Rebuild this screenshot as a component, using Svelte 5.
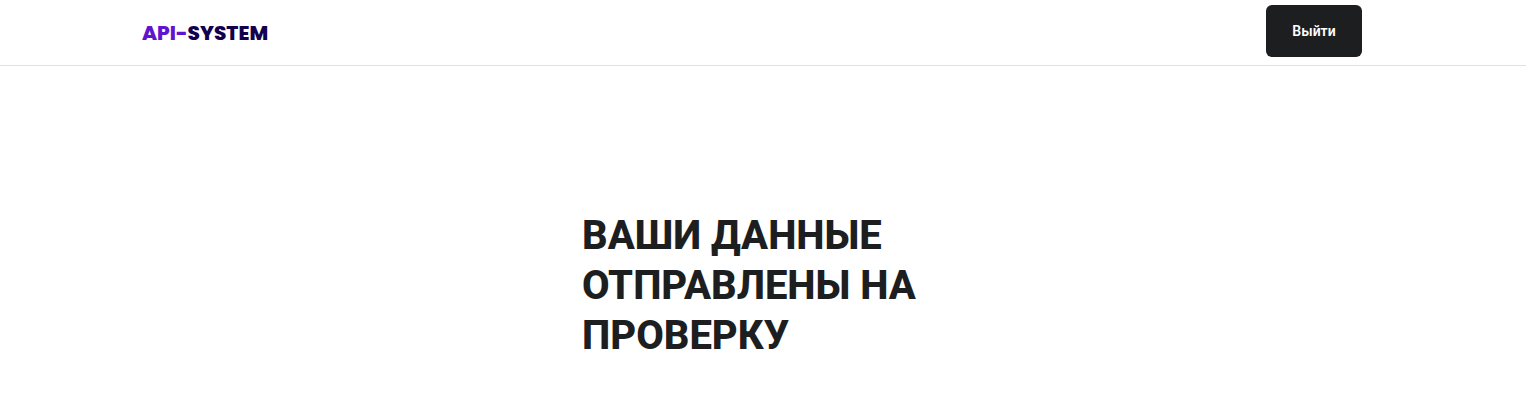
<script>
  let title = 'ВАШИ ДАННЫЕ ОТПРАВЛЕНЫ НА ПРОВЕРКУ';
</script>

<header class="header">
  <div class="logo"><span class="accent">API-</span>SYSTEM</div>
  <button class="logout">Выйти</button>
</header>

<main class="content">
  <h1>{title}</h1>
</main>

<style>
  :global(body) {
    margin: 0;
    background: #fff;
    font-family: Roboto, sans-serif;
  }

  .header {
    display: flex;
    justify-content: space-between;
    align-items: center;
    height: 65px;
    padding: 0 164px 0 142px;
    border-bottom: 1px solid #e2e2e2;
  }

  .logo {
    font-family: Poppins, "Open Sans", sans-serif;
    font-weight: 800;
    font-size: 20px;
    color: #12004f;
  }

  .accent {
    color: #5f14d1;
  }

  .logout {
    align-self: flex-start;
    width: 96px;
    height: 52px;
    margin-top: 5px;
    padding-bottom: 2px;
    border: none;
    border-radius: 6px;
    background: #1d1e20;
    color: #fff;
    font-family: Roboto, sans-serif;
    font-weight: 600;
    font-size: 14px;
  }

  .content {
    padding: 145px 0 0 582px;
  }

  h1 {
    margin: 0;
    width: 400px;
    font-size: 40px;
    line-height: 50px;
    font-weight: 800;
    color: #1d1e20;
  }
</style>
